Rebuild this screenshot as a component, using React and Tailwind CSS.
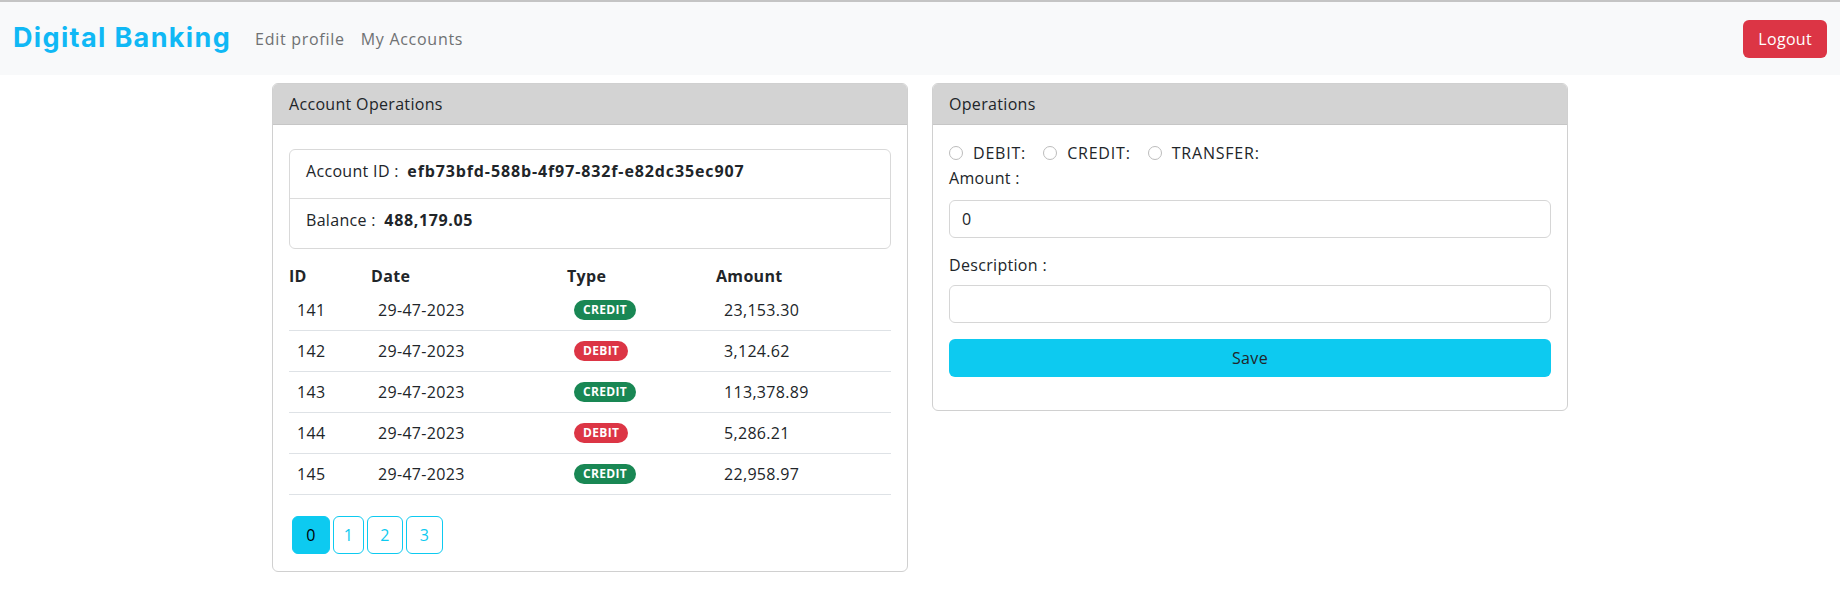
import React from "react";

const ops = [
  { id: 141, date: "29-47-2023", type: "CREDIT", amount: "23,153.30" },
  { id: 142, date: "29-47-2023", type: "DEBIT", amount: "3,124.62" },
  { id: 143, date: "29-47-2023", type: "CREDIT", amount: "113,378.89" },
  { id: 144, date: "29-47-2023", type: "DEBIT", amount: "5,286.21" },
  { id: 145, date: "29-47-2023", type: "CREDIT", amount: "22,958.97" },
];

function Badge({ type }) {
  const cls =
    type === "CREDIT"
      ? "bg-[#198754]"
      : "bg-[#dc3545]";
  return (
    <span
      className={`${cls} inline-flex items-center h-[20px] px-[9px] rounded-full text-white text-[12px] font-bold leading-none`}
    >
      {type}
    </span>
  );
}

function Radio({ label }) {
  return (
    <div className="flex items-center">
      <span className="w-[14px] h-[14px] rounded-full border border-[#bcbcbc] bg-white" />
      <span className="ml-[10px]">{label}</span>
    </div>
  );
}

export default function App() {
  return (
    <div className="w-full min-h-screen bg-white text-[#212529] text-[16px] leading-[24px] font-['Open_Sans',sans-serif] tracking-[0.02em]">
      <div className="h-[2px] bg-[#c4c4c4]" />
      <nav className="h-[73px] bg-[#f8f9fa] flex items-center pl-[13px] pr-[13px]">
        <div className="text-[27px] font-bold text-[#10b8f5] font-['Inter',sans-serif] tracking-[0.05em] leading-none pb-[2px]">
          Digital Banking
        </div>
        <div className="flex items-center ml-[16px] text-[#6f7173] tracking-[0.045em]">
          <a className="px-[8px]">Edit profile</a>
          <a className="px-[8px]">My Accounts</a>
        </div>
        <div className="flex-1" />
        <button className="h-[38px] px-[15px] rounded-[6px] bg-[#dc3545] text-white">
          Logout
        </button>
      </nav>

      <div className="w-[1296px] mx-auto mt-[8px] flex gap-[24px] items-start">
        {/* Left card */}
        <div className="w-[636px] border border-[#d0d0d0] rounded-[6px] overflow-hidden">
          <div className="bg-[#d3d3d3] border-b border-[#c6c6c6] px-[16px] py-[8px]">
            Account Operations
          </div>
          <div className="px-[16px] pt-[24px] pb-[17px]">
            <div className="border border-[#d9d9d9] rounded-[6px]">
              <div className="px-[16px] pt-[9px] pb-[15px] border-b border-[#dcdcdc]">
                Account ID : <span className="font-bold ml-[4px] tracking-[0.055em]">efb73bfd-588b-4f97-832f-e82dc35ec907</span>
              </div>
              <div className="px-[16px] pt-[9px] pb-[16px]">
                Balance : <span className="font-bold ml-[4px] tracking-[0.04em]">488,179.05</span>
              </div>
            </div>

            <div className="mt-[12px]">
              <div className="grid grid-cols-[82px_196px_149px_174px] h-[29px] items-center font-bold">
                <div>ID</div>
                <div>Date</div>
                <div>Type</div>
                <div>Amount</div>
              </div>
              {ops.map((o) => (
                <div
                  key={o.id}
                  className="grid grid-cols-[82px_196px_149px_174px] h-[41px] items-center border-b border-[#dee2e6]"
                >
                  <div className="pl-[8px]">{o.id}</div>
                  <div className="pl-[7px]">{o.date}</div>
                  <div className="pl-[7px] flex items-center">
                    <Badge type={o.type} />
                  </div>
                  <div className="pl-[8px]">{o.amount}</div>
                </div>
              ))}
            </div>

            <div className="flex gap-[3px] mt-[21px] pl-[3px]">
              {["0", "1", "2", "3"].map((p, i) => (
                <button
                  key={p}
                  className={`h-[38px] ${["w-[38px]", "w-[31px]", "w-[36px]", "w-[37px]"][i]} rounded-[6px] border border-[#0dcaf0] ${
                    i === 0 ? "bg-[#0dcaf0] text-black" : "bg-white text-[#0dcaf0]"
                  }`}
                >
                  {p}
                </button>
              ))}
            </div>
          </div>
        </div>

        {/* Right card */}
        <div className="w-[636px] border border-[#d0d0d0] rounded-[6px] overflow-hidden">
          <div className="bg-[#d3d3d3] border-b border-[#c6c6c6] px-[16px] py-[8px]">
            Operations
          </div>
          <div className="px-[16px] pt-[16px] pb-[16px]">
            <div className="flex items-center gap-[17px] tracking-[0.05em]">
              <Radio label="DEBIT:" />
              <Radio label="CREDIT:" />
              <Radio label="TRANSFER:" />
            </div>
            <div className="mt-[1px]">Amount :</div>
            <div className="mt-[10px] h-[38px] border border-[#d6d6d6] rounded-[6px] px-[12px] flex items-center">
              0
            </div>
            <div className="mt-[15px]">Description :</div>
            <div className="mt-[8px] h-[38px] border border-[#d6d6d6] rounded-[6px]" />
            <button className="mt-[16px] w-full h-[38px] rounded-[6px] bg-[#0dcaf0] text-[#212529]">
              Save
            </button>
            <div className="h-[17px]" />
          </div>
        </div>
      </div>
    </div>
  );
}
